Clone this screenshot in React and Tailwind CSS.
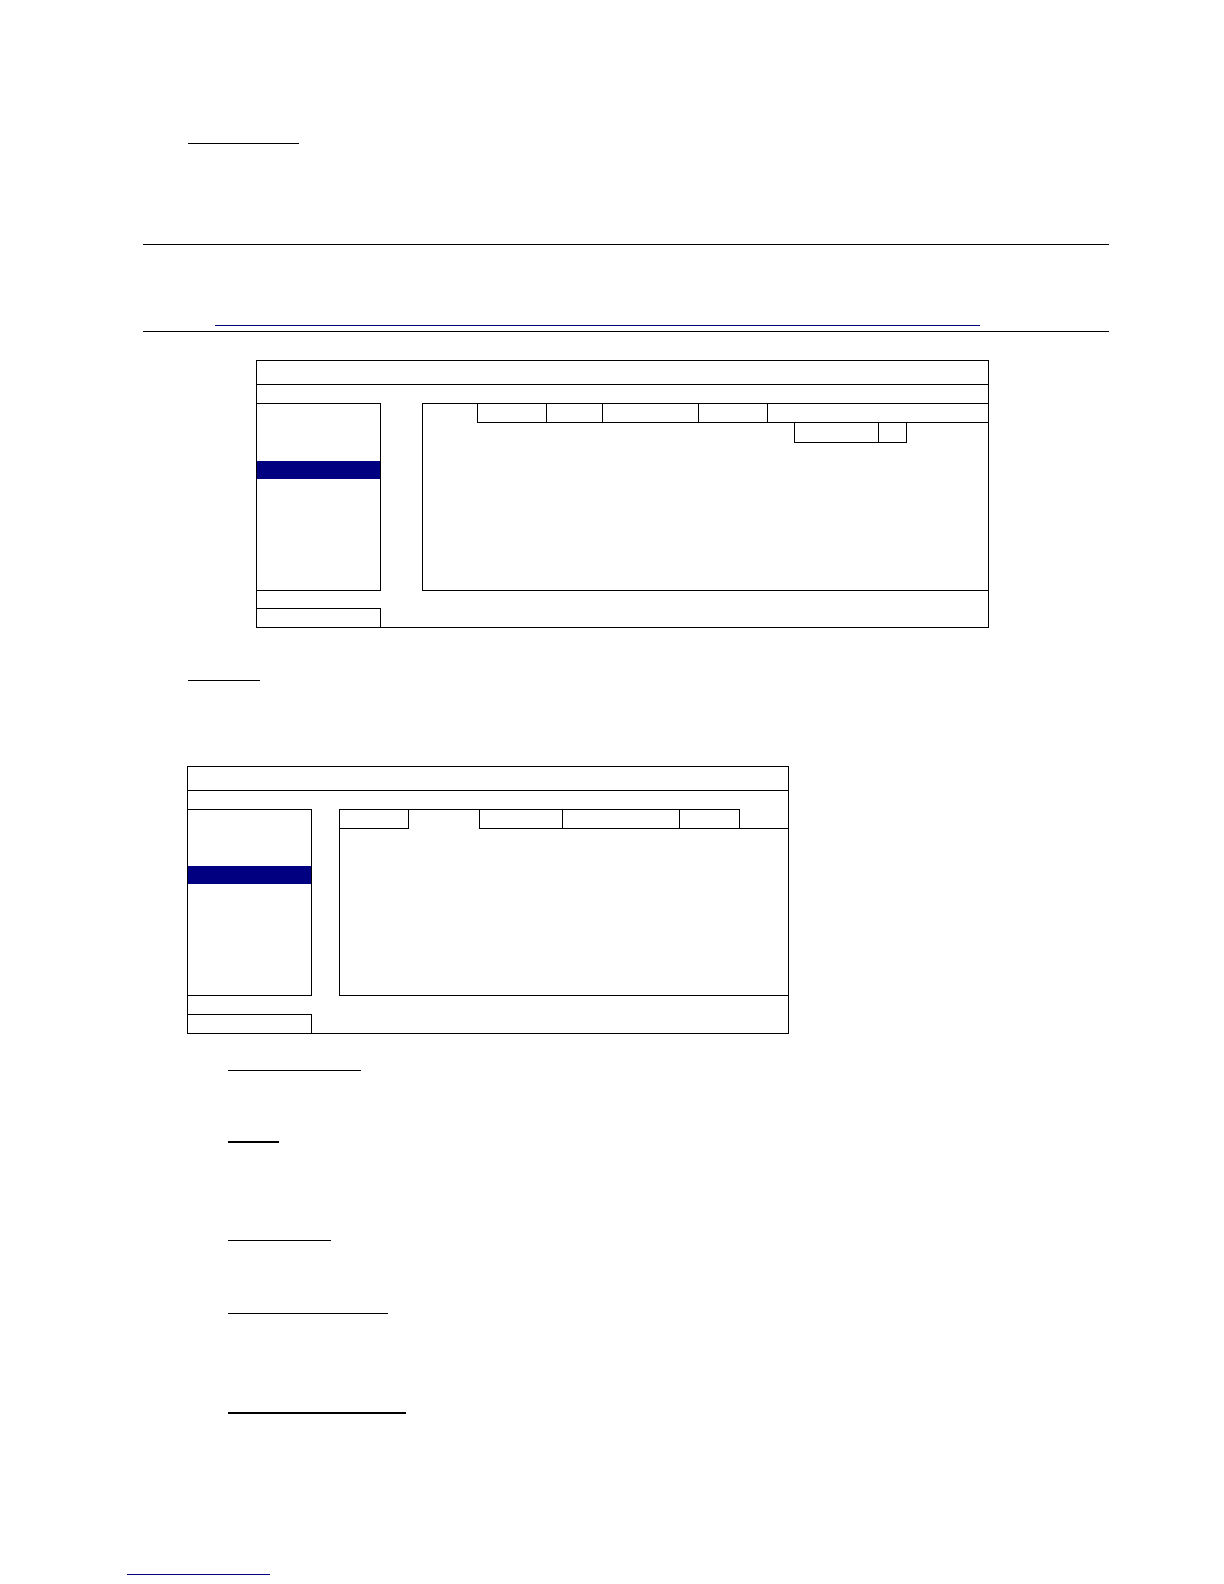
export default function App() {
  return (
    <div className="w-[1224px] min-h-[1584px] bg-white flex flex-col font-['Liberation_Sans',sans-serif]">
      <div className="mt-[143px] ml-[188px] w-[111px] h-px bg-black" />
      <div className="mt-[100px] ml-[143px] w-[966px] h-px bg-black" />
      <div className="mt-[80px] ml-[215px] w-[765px] h-px bg-[#000080]" />
      <div className="mt-[5px] ml-[143px] w-[966px] h-px bg-black" />

      {/* Box 1 */}
      <div className="mt-[28px] ml-[256px] w-[733px] h-[268px] border border-black flex flex-col">
        <div className="h-[24px] border-b border-black" />
        <div className="mt-[18px] h-[188px] flex">
          <div className="w-[124px] h-full border-y border-r border-black">
            <div className="mt-[57px] h-[18px] bg-[#000080]" />
          </div>
          <div className="ml-[41px] flex-1 h-full border-l border-b border-black flex flex-col">
            <div className="flex h-[20px]">
              <div className="w-[54px] border-t border-black" />
              <div className="w-[69px] border-t border-b border-l border-black" />
              <div className="w-[56px] border-t border-b border-l border-black" />
              <div className="w-[96px] border-t border-b border-l border-black" />
              <div className="w-[69px] border-t border-b border-l border-black" />
              <div className="flex-1 border-t border-b border-l border-black" />
            </div>
            <div className="ml-[371px] w-[113px] h-[20px] border-x border-b border-black flex">
              <div className="w-[83px]" />
              <div className="flex-1 border-l border-black" />
            </div>
          </div>
        </div>
        <div className="mt-[17px] w-[124px] h-[19px] border-t border-r border-black" />
      </div>

      <div className="mt-[52px] ml-[188px] w-[72px] h-px bg-black" />

      {/* Box 2 */}
      <div className="mt-[85px] ml-[187px] w-[602px] h-[268px] border border-black flex flex-col">
        <div className="h-[24px] border-b border-black" />
        <div className="mt-[18px] h-[187px] flex">
          <div className="w-[124px] h-full border-y border-r border-black">
            <div className="mt-[56px] h-[18px] bg-[#000080]" />
          </div>
          <div className="ml-[27px] flex-1 h-full border-l border-b border-black flex flex-col">
            <div className="flex h-[20px]">
              <div className="w-[68px] border-t border-b border-black" />
              <div className="w-[71px] border-t border-l border-black" />
              <div className="w-[83px] border-t border-b border-l border-black" />
              <div className="w-[117px] border-t border-b border-l border-black" />
              <div className="w-[61px] border-t border-b border-x border-black" />
              <div className="flex-1 border-b border-black" />
            </div>
          </div>
        </div>
        <div className="mt-[18px] w-[124px] h-[19px] border-t border-r border-black" />
      </div>

      <div className="mt-[36px] ml-[228px] w-[133px] h-px bg-black" />
      <div className="mt-[70px] ml-[228px] w-[51px] h-[2px] bg-black" />
      <div className="mt-[97px] ml-[228px] w-[103px] h-px bg-black" />
      <div className="mt-[72px] ml-[228px] w-[160px] h-px bg-black" />
      <div className="mt-[98px] ml-[228px] w-[178px] h-[2px] bg-black" />
      <div className="mt-[160px] ml-[127px] w-[143px] h-px bg-[#000080]" />
    </div>
  );
}
